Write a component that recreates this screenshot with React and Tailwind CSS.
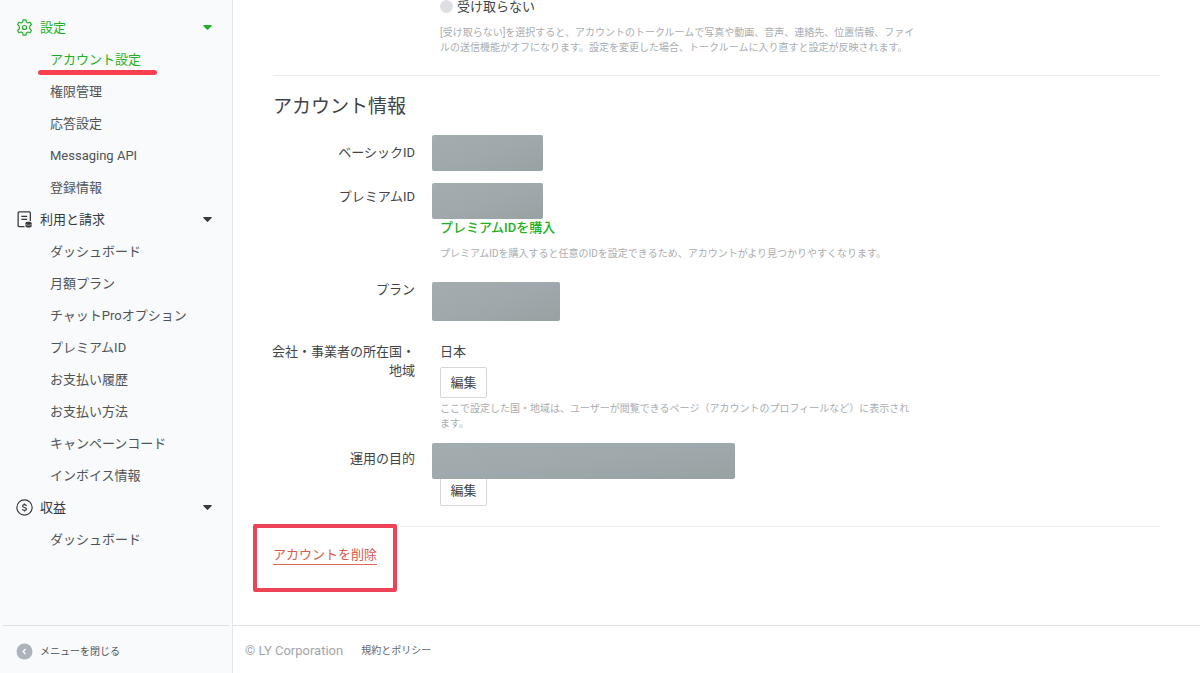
import React from "react";

const menu = [
  {
    title: "設定",
    icon: "gear",
    active: true,
    items: ["アカウント設定", "権限管理", "応答設定", "Messaging API", "登録情報"],
  },
  {
    title: "利用と請求",
    icon: "bill",
    items: [
      "ダッシュボード",
      "月額プラン",
      "チャットProオプション",
      "プレミアムID",
      "お支払い履歴",
      "お支払い方法",
      "キャンペーンコード",
      "インボイス情報",
    ],
  },
  { title: "収益", icon: "dollar", items: ["ダッシュボード"] },
];

const CURRENT = "アカウント設定";

const GearIcon = () => (
  <svg width="17" height="17" viewBox="0 0 16 16" fill="none" stroke="currentColor" strokeWidth="1.1" strokeLinejoin="round">
    <path d="M6.7.8h2.6l.5 2.1 1.3.8 2.1-.7 1.3 2.3-1.6 1.5v2.4l1.6 1.5-1.3 2.3-2.1-.7-1.3.8-.5 2.1H6.7l-.5-2.1-1.3-.8-2.1.7-1.3-2.3 1.6-1.500V6.800L1.500 5.300 2.800 3l2.100.7 1.300-.8z" />
    <circle cx="8" cy="8" r="1.9" />
  </svg>
);

const BillIcon = () => (
  <svg width="17" height="17" viewBox="0 0 16 16" fill="none" stroke="currentColor" strokeWidth="1.2">
    <path d="M8 14.700H3a1 1 0 0 1-1-1V1.900a1 1 0 0 1 1-1h9.500a1 1 0 0 1 1 1V9.500" />
    <path d="M5 5h5.500M5 7.800h5.500" />
    <path d="M8.900 11.500c0-.8 1.200-1.300 2.900-1.300s2.900.5 2.900 1.300v2.800c0 .8-1.200 1.300-2.900 1.300s-2.900-.5-2.900-1.300z" fill="currentColor" stroke="none" />
    <path d="M9.300 12.800c1.300.8 3.700.8 5 0" stroke="#f8fafc" strokeWidth=".5" />
  </svg>
);

const DollarIcon = () => (
  <svg width="17" height="17" viewBox="0 0 16 16" fill="none" stroke="currentColor" strokeWidth="1.1">
    <circle cx="8" cy="8" r="7.200" />
    <path d="M9.900 6.500c-.2-.8-.9-1.200-1.900-1.200-1.100 0-1.800.5-1.800 1.300 0 1.900 3.700.8 3.700 2.800 0 .8-.7 1.300-1.900 1.300-1.100 0-1.800-.5-1.900-1.300M8 4.200v1.200M8 10.600v1.200" />
  </svg>
);

const icons = { gear: GearIcon, bill: BillIcon, dollar: DollarIcon };

const Caret = () => (
  <svg width="9" height="5" viewBox="0 0 9 5" fill="currentColor">
    <path d="M.8 0h7.400c.6 0 .8.5.4.900L5.200 4.500a1 1 0 0 1-1.400 0L.4.900C0 .5.200 0 .8 0z" />
  </svg>
);

const MenuGroup = ({ title, icon, items, active }) => {
  const Icon = icons[icon];
  return (
    <li>
      <button
        type="button"
        className={`flex h-8 w-full items-center gap-[7px] pl-4 pr-5 ${active ? "text-[#1fb123]" : "text-[#36393c]"}`}
      >
        <Icon />
        <span className="flex-1 text-left">{title}</span>
        <Caret />
      </button>
      <ul>
        {items.map((item) => (
          <li key={item}>
            <a
              href="#"
              className={`relative flex h-8 items-center pl-[50px] ${item === CURRENT ? "text-[#1fb123]" : ""}`}
            >
              {item}
              {item === CURRENT && (
                <span className="absolute bottom-0 left-[38px] h-[5px] w-[119px] rounded-full bg-[#f8404f]" />
              )}
            </a>
          </li>
        ))}
      </ul>
    </li>
  );
};

const Sidebar = () => (
  <aside className="flex w-[233px] shrink-0 flex-col border-r border-[#e3e7eb] bg-[#f8fafc] text-[#505356]">
    <nav className="pt-[11px]">
      <ul>
        {menu.map((group) => (
          <MenuGroup key={group.title} {...group} />
        ))}
      </ul>
    </nav>
    <div className="mx-[3px] mt-auto h-12 border-t border-[#dfe3e7]">
      <button type="button" className="flex h-full w-full items-center gap-[7px] pl-[13px] pt-1 text-[10px]">
        <svg width="17" height="17" viewBox="0 0 16 16" fill="none">
          <circle cx="8" cy="8" r="7.500" fill="#adb3ba" />
          <path d="M9 5.500 6.700 8 9 10.500" stroke="#fff" strokeWidth="1.300" />
        </svg>
        メニューを閉じる
      </button>
    </div>
  </aside>
);

// Grey block that hides a private value
const Masked = ({ className }) => (
  <div
    className={`relative -ml-2 rounded-xs bg-linear-to-br from-[#a3adaf] via-[#9fa9ad] to-[#98a2a2] ${className}`}
  />
);

const Row = ({ label, className, labelClass = "", children }) => (
  <div className={`grid grid-cols-[146px_1fr] gap-[25px] ${className}`}>
    <dt className={`text-right ${labelClass}`}>{label}</dt>
    <dd>{children}</dd>
  </div>
);

const Help = ({ className = "", children }) => (
  <p className={`max-w-[478px] text-[10px] leading-[15px] text-[#a9adb1] ${className}`}>{children}</p>
);

const EditButton = ({ className = "" }) => (
  <button
    type="button"
    className={`block h-[31px] w-[47px] rounded-xs border border-[#d5d8db] bg-white ${className}`}
  >
    編集
  </button>
);

const AccountInfo = () => (
  <section className="border-y border-[#e9ebed] pb-5 pt-[17px]">
    <h2 className="text-[19px] leading-7">アカウント情報</h2>
    <dl className="-ml-1">
      <Row label="ベーシックID" className="mt-[14px]" labelClass="pt-2">
        <Masked className="h-9 w-[111px]" />
      </Row>
      <Row label="プレミアムID" className="mt-3" labelClass="pt-1">
        <Masked className="h-9 w-[111px]" />
        <a href="#" className="block font-medium leading-[17px] text-[#1fb123]">プレミアムIDを購入</a>
        <Help className="mt-[10px]">
          プレミアムIDを購入すると任意のIDを設定できるため、アカウントがより見つかりやすくなります。
        </Help>
      </Row>
      <Row label="プラン" className="mt-[19px]">
        <Masked className="mt-[2px] h-[39px] w-32" />
      </Row>
      <Row label="会社・事業者の所在国・地域" className="mt-[21px]">
        日本
        <EditButton className="mt-[6px]" />
        <Help className="mt-[3px]">
          ここで設定した国・地域は、ユーザーが閲覧できるページ（アカウントのプロフィールなど）に表示されます。
        </Help>
      </Row>
      <Row label="運用の目的" className="mt-3" labelClass="pt-[6px]">
        <Masked className="z-10 h-9 w-[303px]" />
        <EditButton className="-mt-1" />
      </Row>
    </dl>
  </section>
);

export default function App() {
  return (
    <div className="flex min-h-screen bg-white font-['Roboto','Noto_Sans_CJK_JP',sans-serif] text-[13px] leading-[19px] text-[#414446]">
      <Sidebar />
      <div className="flex min-w-0 flex-1 flex-col">
        <main className="flex-1 px-10">
          <div className="pb-5 pl-[167px]">
            <label className="flex items-center gap-1 leading-[13px]">
              <input
                type="radio"
                name="media"
                className="size-[13px] appearance-none rounded-full bg-[#dddfe3]"
              />
              受け取らない
            </label>
            <Help className="mt-3">
              [受け取らない]を選択すると、アカウントのトークルームで写真や動画、音声、連絡先、位置情報、ファイルの送信機能がオフになります。設定を変更した場合、トークルームに入り直すと設定が反映されます。
            </Help>
          </div>
          <AccountInfo />
          <div className="pt-[18px]">
            <a href="#" className="relative inline-block border-b border-[#d96a5c] leading-[18px] text-[#d75b4c]">
              アカウントを削除
              <span className="absolute -inset-x-5 -bottom-7 -top-[22px] rounded-xs border-4 border-[#ee4256]" />
            </a>
          </div>
        </main>
        <footer className="flex h-12 items-center gap-[18px] border-t border-[#dfe3e7] px-3 pt-[2px]">
          <span className="text-[#a2a6aa]">© LY Corporation</span>
          <a href="#" className="text-[10px] text-[#5f656c]">規約とポリシー</a>
        </footer>
      </div>
    </div>
  );
}
